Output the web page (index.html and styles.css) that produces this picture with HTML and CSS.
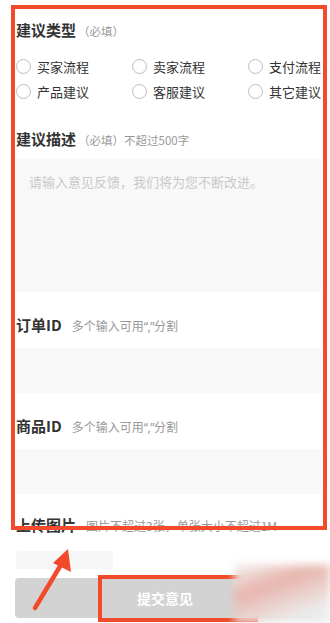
FILE: index.html
```html
<!DOCTYPE html>
<html lang="zh-CN">
<head>
<meta charset="utf-8">
<link rel="stylesheet" href="styles.css">
</head>
<body>
<div class="page">
  <div class="form">
    <div class="title t1">建议类型<span class="hint paren">（必填）</span></div>
    <div class="radios">
      <label class="radio"><span class="circle"></span>买家流程</label>
      <label class="radio"><span class="circle"></span>卖家流程</label>
      <label class="radio"><span class="circle"></span>支付流程</label>
      <label class="radio"><span class="circle"></span>产品建议</label>
      <label class="radio"><span class="circle"></span>客服建议</label>
      <label class="radio"><span class="circle"></span>其它建议</label>
    </div>
    <div class="title t2">建议描述<span class="hint paren">（必填）不超过500字</span></div>
    <div class="textarea">请输入意见反馈，我们将为您不断改进。</div>
    <div class="title t3">订单ID<span class="hint">多个输入可用<span class="latin">“,”</span>分割</span></div>
    <div class="input"></div>
    <div class="title t4">商品ID<span class="hint">多个输入可用<span class="latin">“,”</span>分割</span></div>
    <div class="input"></div>
    <div class="title t5">上传图片<span class="hint">图片不超过3张，单张大小不超过1M</span></div>
    <div class="upload"></div>
  </div>
  <div class="bottom">
    <div class="submit">提交意见</div>
  </div>

  <div class="mark mark-form"></div>
  <div class="mark mark-btn"></div>
  <div class="blur"></div>
  <svg class="arrow" width="60" height="80" viewBox="0 0 60 80">
    <line x1="6" y1="72" x2="33" y2="27" stroke="#f24a2b" stroke-width="4.5" stroke-linecap="round"/>
    <polygon points="39,13 42,36 24,27" fill="#f24a2b"/>
  </svg>
</div>
</body>
</html>
```
FILE: styles.css
```css
* { box-sizing: border-box; }
html, body { margin: 0; padding: 0; background: #fff; }
body {
  font-family: "Noto Sans CJK SC", "Noto Sans", sans-serif;
  color: #333;
  width: 330px;
  height: 623px;
  overflow: hidden;
}
.page { position: relative; width: 330px; height: 623px; overflow: hidden; }
.form { padding: 20px 0 0 16px; }
.title {
  font-size: 15px;
  font-weight: 700;
  line-height: 20px;
  color: #333;
  display: flex;
  align-items: baseline;
  white-space: nowrap;
}
.hint {
  font-size: 12px;
  font-weight: 400;
  color: #999;
  margin-left: 10px;
}
.hint.paren { margin-left: 2px; font-size: 11.5px; }
.latin { font-family: "Noto Sans", sans-serif; letter-spacing: -0.5px; }
.radios {
  display: grid;
  grid-template-columns: 116px 116px 1fr;
  grid-auto-rows: 25px;
  margin-top: 13px;
}
.radio {
  display: flex;
  align-items: center;
  font-size: 13px;
  color: #333;
  white-space: nowrap;
  overflow: hidden;
}
.circle {
  width: 15px;
  height: 15px;
  border: 1px solid #bdbdbd;
  border-radius: 50%;
  margin-right: 6px;
  flex: none;
}
.t2 { margin-top: 25px; }
.textarea {
  margin-top: 9px;
  width: 305px;
  height: 133px;
  background: #f8f8f8;
  padding: 14px 13px;
  font-size: 13px;
  line-height: 18px;
  color: #c9c9c9;
}
.t3 { margin-top: 23px; }
.input {
  margin-top: 11px;
  width: 305px;
  height: 45px;
  background: #f8f8f8;
}
.t4 { margin-top: 23px; }
.t5 { margin-top: 21px; }
.upload {
  margin-top: 15px;
  width: 97px;
  height: 18px;
  background: #f6f6f6;
  border-radius: 4px 4px 0 0;
}
.bottom {
  padding: 9px 15px 0 15px;
}
.submit {
  height: 40px;
  background: #d3d3d3;
  border-radius: 4px;
  color: #fff;
  font-size: 14px;
  font-weight: 700;
  display: flex;
  align-items: center;
  justify-content: center;
}
.mark {
  position: absolute;
  border: 4px solid #f24a2b;
}
.mark-form { left: 11px; top: 5px; width: 316px; height: 525px; }
.mark-btn { left: 98px; top: 575px; width: 160px; height: 47px; }
.blur {
  position: absolute;
  left: 234px;
  top: 565px;
  width: 96px;
  height: 58px;
  background:
    linear-gradient(160deg, rgba(255,255,255,0) 0%, rgba(230,170,160,0.85) 35%, rgba(228,180,172,0.6) 55%, rgba(235,235,235,0.9) 80%),
    #f2f2f2;
  filter: blur(4px);
}
.arrow { position: absolute; left: 29px; top: 536px; }
```
